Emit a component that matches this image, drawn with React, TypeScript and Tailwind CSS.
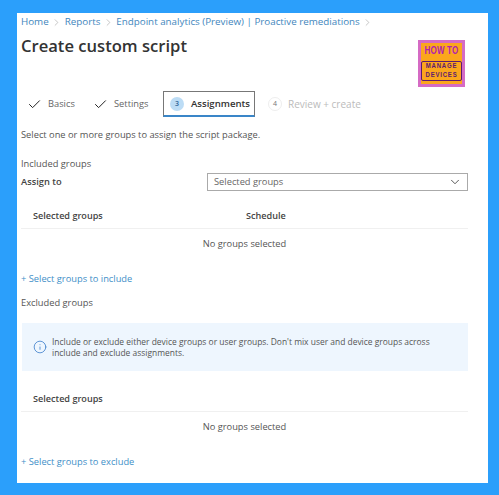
import { ChevronRight, Check, ChevronDown, Info } from "lucide-react";

const CRUMBS = ["Home", "Reports", "Endpoint analytics (Preview) | Proactive remediations"];

function Logo() {
  return (
    <div className="flex h-[47px] w-[47px] flex-col items-center border-[3px] border-[#d56bc4] bg-[#fba61c] font-['Liberation_Sans',sans-serif] font-bold leading-none">
      <span className="mt-[4px] scale-y-125 text-[8px] tracking-[0.2px] text-[#b01fb0]">HOW TO</span>
      <div className="mt-[6px] flex h-[20px] w-[41px] flex-col items-center justify-center rounded-[2px] border border-[#5d1a70] text-[6px] leading-[9px] tracking-[0.8px] text-[#5d1a70]">
        <span className="scale-y-125">MANAGE</span>
        <span className="scale-y-125">DEVICES</span>
      </div>
    </div>
  );
}

function DoneStep({ label, width }: { label: string; width: string }) {
  return (
    <div className={`flex items-center gap-[6px] text-[9.3px] ${width}`}>
      <Check size={15} strokeWidth={1.6} className="text-[#222]" />
      <span className="text-[#666]">{label}</span>
    </div>
  );
}

function GroupTable({ schedule, marginTop }: { schedule?: boolean; marginTop: string }) {
  return (
    <div className={marginTop}>
      <div className="flex h-[25px] items-center border-b border-[#f0f0f0] pl-[12px] text-[9.1px] font-semibold text-[#444]">
        <span className="w-[213px]">Selected groups</span>
        {schedule && <span>Schedule</span>}
      </div>
      <div className="mt-[8px] text-center text-[#555]">No groups selected</div>
    </div>
  );
}

export default function App() {
  return (
    <div className="h-[495px] w-[499px] bg-[#2b9ffb] pl-[17px] pt-[13px] font-['Open_Sans',sans-serif] text-[9.3px] leading-[14px]">
      <div className="h-[470px] w-[471px] bg-white pl-[4px] pr-[20px] pt-[2px]">
        <div className="flex h-[14px] items-center text-[9.8px] text-[#3f86bd]">
          {CRUMBS.map((c) => (
            <span key={c} className="flex items-center">
              {c}
              <ChevronRight size={11} strokeWidth={1.2} className="mx-[2.5px] text-[#999]" />
            </span>
          ))}
        </div>

        <div className="flex items-start justify-between">
          <h1 className="mt-[5px] text-[16.6px] font-semibold leading-[24px] text-[#333]">Create custom script</h1>
          <div className="mr-[3px] mt-[11px]">
            <Logo />
          </div>
        </div>

        <div className="mt-[4px] flex h-[26px] items-center pl-[6px]">
          <DoneStep label="Basics" width="w-[66px]" />
          <DoneStep label="Settings" width="w-[70px]" />
          <div className="flex h-[26px] w-[92px] items-center gap-[7px] border border-[#777] border-b-2 border-b-[#3a86c8] pl-[6px] text-[9.6px] font-semibold text-[#333]">
            <span className="flex h-[14px] w-[14px] items-center justify-center rounded-full bg-[#bcdcf5] text-[7px] text-[#33689a]">3</span>
            Assignments
          </div>
          <div className="ml-[13px] flex items-center gap-[6px] text-[10px] text-[#bbb]">
            <span className="flex h-[14px] w-[14px] items-center justify-center rounded-full border border-[#eee] text-[7px] text-[#777]">4</span>
            Review + create
          </div>
        </div>

        <p className="mt-[11px] text-[#555]">Select one or more groups to assign the script package.</p>
        <p className="mt-[15px] text-[#555]">Included groups</p>

        <div className="mt-[2px] flex h-[18px] items-center justify-between">
          <span className="font-semibold text-[#444]">Assign to</span>
          <div className="flex h-[18px] w-[261px] items-center justify-between border border-[#aaa] pl-[6px] pr-[5px] text-[#666]">
            Selected groups
            <ChevronDown size={14} strokeWidth={1.4} className="text-[#333]" />
          </div>
        </div>

        <GroupTable schedule marginTop="mt-[13px]" />

        <p className="mt-[21px] text-[#3f8fc8]">+ Select groups to include</p>
        <p className="mt-[10px] text-[#555]">Excluded groups</p>

        <div className="ml-[1px] mt-[13px] flex h-[48px] items-center bg-[#eef6fe] pl-[11px] pr-[36px] text-[8.45px] leading-[11px] text-[#555]">
          <Info size={14} strokeWidth={1.4} className="mr-[5px] shrink-0 text-[#3f7fcb]" />
          <span>Include or exclude either device groups or user groups. Don't mix user and device groups across include and exclude assignments.</span>
        </div>

        <GroupTable marginTop="mt-[16px]" />

        <p className="mt-[21px] text-[#3f8fc8]">+ Select groups to exclude</p>
      </div>
    </div>
  );
}
